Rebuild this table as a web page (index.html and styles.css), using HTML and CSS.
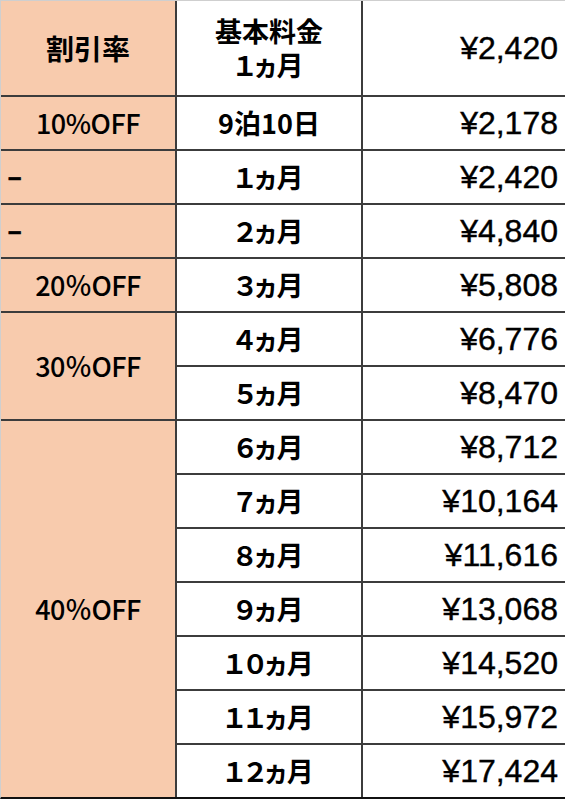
FILE: index.html
```html
<!DOCTYPE html>
<html lang="ja">
<head>
<meta charset="utf-8">
<title>料金表</title>
<link rel="stylesheet" href="styles.css">
</head>
<body>
<div class="price-table">
  <div class="cell rate head">割引率</div>
  <div class="cell plan head"><span class="line">基本料金</span><span class="line">１ヵ月</span></div>
  <div class="cell price">¥2,420</div>

  <div class="cell rate off">10%OFF</div>
  <div class="cell plan">9泊10日</div>
  <div class="cell price">¥2,178</div>

  <div class="cell rate dash">–</div>
  <div class="cell plan">１ヵ月</div>
  <div class="cell price">¥2,420</div>

  <div class="cell rate dash">–</div>
  <div class="cell plan">２ヵ月</div>
  <div class="cell price">¥4,840</div>

  <div class="cell rate off">20％OFF</div>
  <div class="cell plan">３ヵ月</div>
  <div class="cell price">¥5,808</div>

  <div class="cell rate off span2">30％OFF</div>
  <div class="cell plan">４ヵ月</div>
  <div class="cell price">¥6,776</div>
  <div class="cell plan">５ヵ月</div>
  <div class="cell price">¥8,470</div>

  <div class="cell rate off span7">40％OFF</div>
  <div class="cell plan">６ヵ月</div>
  <div class="cell price">¥8,712</div>
  <div class="cell plan">７ヵ月</div>
  <div class="cell price">¥10,164</div>
  <div class="cell plan">８ヵ月</div>
  <div class="cell price">¥11,616</div>
  <div class="cell plan">９ヵ月</div>
  <div class="cell price">¥13,068</div>
  <div class="cell plan">１０ヵ月</div>
  <div class="cell price">¥14,520</div>
  <div class="cell plan">１１ヵ月</div>
  <div class="cell price">¥15,972</div>
  <div class="cell plan">１２ヵ月</div>
  <div class="cell price">¥17,424</div>
</div>
</body>
</html>
```

FILE: styles.css
```css
html, body {
  margin: 0;
  padding: 0;
  background: #ffffff;
}

.price-table {
  box-sizing: border-box;
  width: 565px;
  display: grid;
  grid-template-columns: 174px 184px 1fr;
  grid-template-rows: 94px repeat(13, 52px);
  gap: 2px;
  background: #3c3c3c;
  border-top: 1px solid #cfcfcf;
  border-left: 1px solid #cfcfcf;
  border-bottom: 2px solid #111111;
  color: #000000;
}

.cell {
  display: flex;
  align-items: center;
  background: #ffffff;
  font-family: "Noto Sans CJK JP", "Noto Sans", sans-serif;
  font-size: 27px;
  line-height: 32px;
  font-feature-settings: "palt";
}

.rate {
  background: #f8cbad;
  justify-content: center;
  grid-column: 1;
}

.rate.head {
  font-weight: 700;
  font-size: 28px;
}

.rate.off {
  font-weight: 500;
  font-size: 27px;
  letter-spacing: -0.5px;
}

.rate.dash {
  justify-content: flex-start;
  padding-left: 7px;
  font-family: "Liberation Sans", Arial, sans-serif;
  font-weight: 700;
  font-size: 24px;
  -webkit-text-stroke: 0.6px #000000;
}

.span2 {
  grid-row: span 2;
}

.span7 {
  grid-row: span 7;
}

.plan {
  justify-content: center;
  text-align: center;
  font-weight: 700;
  grid-column: 2;
}

.plan.head {
  flex-direction: column;
  line-height: 34px;
}

.line {
  display: block;
}

.price {
  justify-content: flex-end;
  padding-right: 7px;
  font-family: "Liberation Sans", Arial, sans-serif;
  font-size: 32px;
  font-feature-settings: normal;
  -webkit-text-stroke: 0.4px #000000;
  grid-column: 3;
}
```
